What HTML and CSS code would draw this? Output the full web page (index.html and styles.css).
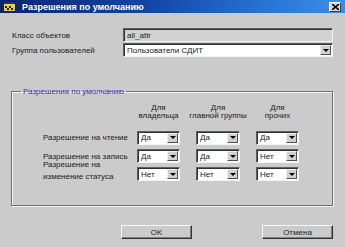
FILE: index.html
```html
<!DOCTYPE html>
<html lang="ru">
<head>
<meta charset="utf-8">
<link rel="stylesheet" href="styles.css">
</head>
<body>
<div class="window">
  <div class="titlebar">
    <svg class="app-icon" width="13" height="11" viewBox="0 0 13 11">
      <rect x="0.5" y="0.5" width="12" height="10" fill="#e8d040" stroke="#202020"/>
      <rect x="1" y="1" width="11" height="2" fill="#203080"/>
      <rect x="2" y="5" width="2" height="2" fill="#202020"/>
      <rect x="6" y="5" width="2" height="2" fill="#202020"/>
      <rect x="4" y="7" width="2" height="2" fill="#202020"/>
      <rect x="8" y="7" width="2" height="2" fill="#202020"/>
    </svg>
    <span class="title">Разрешения по умолчанию</span>
    <span class="close">
      <svg width="7" height="6" viewBox="0 0 7 6"><path d="M0 0 L7 6 M7 0 L0 6" stroke="#000" stroke-width="1.6"/></svg>
    </span>
  </div>

  <div class="content">
    <div class="form">
      <label class="lbl">Класс объектов</label>
      <div class="field readonly">all_attr</div>
      <label class="lbl">Группа пользователей</label>
      <div class="combo wide"><span class="val">Пользователи СДИТ</span><span class="arrow"></span></div>
    </div>

    <fieldset class="group">
      <legend>Разрешения по умолчанию</legend>
      <div class="perm">
        <div></div>
        <div class="head">Для<br>владельца</div>
        <div class="head">Для<br>главной группы</div>
        <div class="head">Для<br>прочих</div>

        <div class="rlbl">Разрешение на чтение</div>
        <div class="combo"><span class="val">Да</span><span class="arrow"></span></div>
        <div class="combo"><span class="val">Да</span><span class="arrow"></span></div>
        <div class="combo"><span class="val">Да</span><span class="arrow"></span></div>

        <div class="rlbl">Разрешение на запись</div>
        <div class="combo"><span class="val">Да</span><span class="arrow"></span></div>
        <div class="combo"><span class="val">Да</span><span class="arrow"></span></div>
        <div class="combo"><span class="val">Нет</span><span class="arrow"></span></div>

        <div class="rlbl two">Разрешение на<br>изменение статуса</div>
        <div class="combo"><span class="val">Нет</span><span class="arrow"></span></div>
        <div class="combo"><span class="val">Нет</span><span class="arrow"></span></div>
        <div class="combo"><span class="val">Нет</span><span class="arrow"></span></div>
      </div>
    </fieldset>

    <div class="buttons">
      <button class="btn">OK</button>
      <button class="btn">Отмена</button>
    </div>
  </div>
</div>
</body>
</html>
```

FILE: styles.css
```css
html, body {
  margin: 0;
  padding: 0;
  background: #cbcbcb;
}
.window {
  width: 345px;
  height: 247px;
  background: #cbcbcb;
  display: flex;
  flex-direction: column;
  font-family: "Liberation Sans", Arial, sans-serif;
  font-size: 8px;
  color: #202020;
  overflow: hidden;
}
.titlebar {
  height: 13px;
  display: flex;
  align-items: center;
  padding: 0 4px 0 3px;
  background: linear-gradient(90deg, #0a2470 0%, #1448a8 45%, #2a78d8 80%, #3c8ee8 100%);
}
.app-icon { flex: none; }
.title {
  color: #fff;
  font-weight: bold;
  font-size: 9px;
  margin-left: 6px;
  flex: 1;
  white-space: nowrap;
}
.close {
  width: 12px;
  height: 10px;
  box-sizing: border-box;
  background: #d4d4d4;
  border: 1px solid;
  border-color: #fff #404040 #404040 #fff;
  display: flex;
  align-items: center;
  justify-content: center;
}
.content {
  flex: 1;
  display: flex;
  flex-direction: column;
  padding: 15px 12px 0 11px;
}
.form {
  display: grid;
  grid-template-columns: 112px 210px;
  grid-auto-rows: 14px;
  row-gap: 1px;
  align-items: center;
}
.lbl { padding-left: 1px; white-space: nowrap; }
.field, .combo {
  box-sizing: border-box;
  height: 14px;
  border: 1px solid;
  border-color: #606060 #f4f4f4 #f4f4f4 #606060;
  box-shadow: inset 1px 1px 0 #303030;
  display: flex;
  align-items: center;
  white-space: nowrap;
}
.field.readonly {
  background: #d2d2d2;
  padding-left: 3px;
}
.combo {
  background: #fff;
}
.combo .val {
  flex: 1;
  padding-left: 3px;
  overflow: hidden;
}
.combo .arrow {
  flex: none;
  width: 11px;
  height: 10px;
  margin-right: 1px;
  box-sizing: border-box;
  background: #d0d0d0;
  border: 1px solid;
  border-color: #f0f0f0 #505050 #505050 #f0f0f0;
  display: flex;
  align-items: center;
  justify-content: center;
}
.combo .arrow::after {
  content: "";
  width: 0;
  height: 0;
  border-left: 3px solid transparent;
  border-right: 3px solid transparent;
  border-top: 3px solid #000;
}
.group {
  margin: 30px 0 0 0;
  padding: 0;
  height: 119px;
  box-sizing: border-box;
  border: 1px solid #707070;
  box-shadow: 1px 1px 0 #f4f4f4, inset 1px 1px 0 #f4f4f4;
  min-width: 0;
}
.group legend {
  color: #3030a8;
  padding: 0 2px;
  margin-left: 9px;
  line-height: 9px;
}
.perm {
  display: grid;
  grid-template-columns: 109px 43px 44px 43px;
  column-gap: 16px;
  grid-template-rows: 22px 15px 14px 14px;
  row-gap: 4px;
  margin-top: 8px;
  align-items: center;
}
.head {
  text-align: center;
  line-height: 8px;
  white-space: nowrap;
  justify-self: center;
  align-self: start;
}
.rlbl {
  padding-left: 31px;
  white-space: nowrap;
}
.rlbl.two {
  line-height: 12px;
  align-self: start;
  margin-top: -8px;
}
.perm .combo { height: 14px; }
.buttons {
  display: flex;
  justify-content: flex-end;
  gap: 70px;
  margin-top: 19px;
}
.btn {
  width: 71px;
  height: 14px;
  box-sizing: border-box;
  font: inherit;
  font-size: 8px;
  color: #202020;
  background: #cbcbcb;
  border: 1px solid;
  border-color: #f4f4f4 #303030 #303030 #f4f4f4;
  box-shadow: inset -1px -1px 0 #808080;
  padding: 0;
}
```
